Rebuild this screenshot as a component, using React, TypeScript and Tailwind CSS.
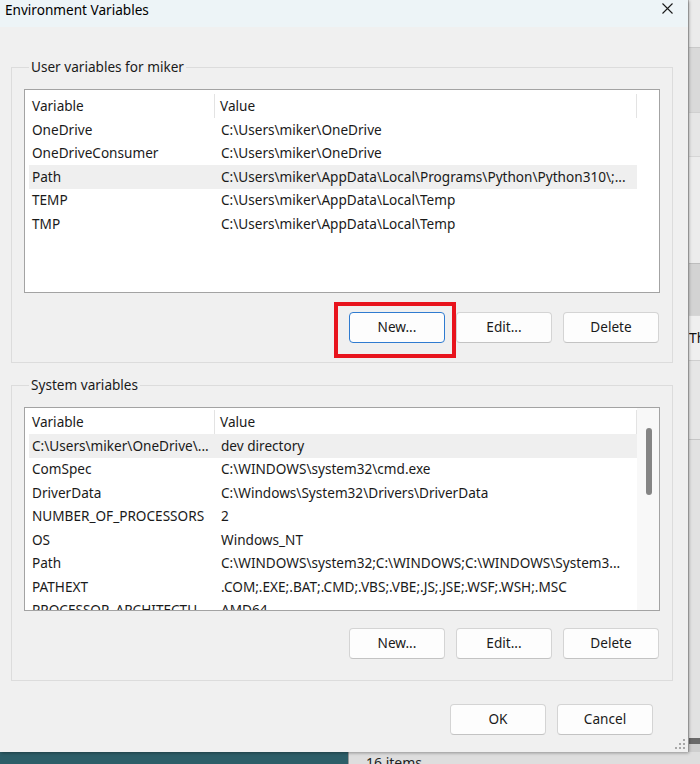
import { ReactNode } from "react";

type Row = [string, string];

const userRows: Row[] = [
  ["OneDrive", "C:\\Users\\miker\\OneDrive"],
  ["OneDriveConsumer", "C:\\Users\\miker\\OneDrive"],
  ["Path", "C:\\Users\\miker\\AppData\\Local\\Programs\\Python\\Python310\\;..."],
  ["TEMP", "C:\\Users\\miker\\AppData\\Local\\Temp"],
  ["TMP", "C:\\Users\\miker\\AppData\\Local\\Temp"],
];

const systemRows: Row[] = [
  ["C:\\Users\\miker\\OneDrive\\...", "dev directory"],
  ["ComSpec", "C:\\WINDOWS\\system32\\cmd.exe"],
  ["DriverData", "C:\\Windows\\System32\\Drivers\\DriverData"],
  ["NUMBER_OF_PROCESSORS", "2"],
  ["OS", "Windows_NT"],
  ["Path", "C:\\WINDOWS\\system32;C:\\WINDOWS;C:\\WINDOWS\\System3..."],
  ["PATHEXT", ".COM;.EXE;.BAT;.CMD;.VBS;.VBE;.JS;.JSE;.WSF;.WSH;.MSC"],
  ["PROCESSOR_ARCHITECTU...", "AMD64"],
];

interface VarListProps {
  rows: Row[];
  selected: number;
  headerClass: string;
  scrollbar?: boolean;
}

function VarList({ rows, selected, headerClass, scrollbar }: VarListProps) {
  return (
    <div className="flex h-[204px] overflow-hidden border border-[#a3a3a3] bg-white">
      <div className="flex w-[612px] flex-col pl-[4px]">
        <div className={`flex shrink-0 items-end ${headerClass}`}>
          <div className="flex h-[24px] w-[186px] items-center border-r border-[#e3e3e3] pl-[3px]">
            Variable
          </div>
          <div className="flex h-[24px] flex-1 items-center border-r border-[#e3e3e3] pl-[5px]">
            Value
          </div>
        </div>
        {rows.map(([name, value], i) => (
          <div
            key={name + i}
            className={`flex h-[23.5px] shrink-0 items-center whitespace-nowrap ${
              i === selected ? "bg-[#efefef]" : ""
            }`}
          >
            <div className="w-[186px] overflow-hidden pl-[3px]">{name}</div>
            <div className="flex-1 overflow-hidden pl-[6px]">{value}</div>
          </div>
        ))}
      </div>
      <div className={`w-[22px] pl-[9px] pt-[20px] ${scrollbar ? "bg-[#f8f8f8]" : ""}`}>
        {scrollbar && <div className="h-[67px] w-[6px] rounded-[3px] bg-[#858585]" />}
      </div>
    </div>
  );
}

function Btn({ label, focused }: { label: string; focused?: boolean }) {
  return (
    <button
      className={`flex h-[31px] w-[96px] items-center justify-center rounded-[4px] border bg-[#fdfdfd] text-[#1a1a1a] ${
        focused ? "border-[#2f7bd0]" : "border-[#d4d4d4] border-b-[#c3c3c3]"
      }`}
    >
      {label}
    </button>
  );
}

function Group({ title, children, className }: { title: string; children: ReactNode; className: string }) {
  return (
    <fieldset className={`border border-[#dcdcdc] px-[12px] ${className}`}>
      <legend className="ml-[5px] px-[2px] leading-[20px]">{title}</legend>
      {children}
    </fieldset>
  );
}

function ButtonRow({ focusNew }: { focusNew?: boolean }) {
  return (
    <div className="flex justify-end gap-[11px] pr-[1px]">
      <Btn label="New..." focused={focusNew} />
      <Btn label="Edit..." />
      <Btn label="Delete" />
    </div>
  );
}

function ResizeGrip() {
  return (
    <svg className="absolute bottom-[2px] right-[2px]" width="12" height="12" viewBox="0 0 12 12">
      <g fill="#a8a8a8">
        <rect x="9" y="1" width="2" height="2" />
        <rect x="5" y="5" width="2" height="2" />
        <rect x="9" y="5" width="2" height="2" />
        <rect x="1" y="9" width="2" height="2" />
        <rect x="5" y="9" width="2" height="2" />
        <rect x="9" y="9" width="2" height="2" />
      </g>
    </svg>
  );
}

function SideStrip() {
  return (
    <div className="flex w-[12px] flex-col border-l border-[#bcbcbc]">
      <div className="h-[47px] bg-[#ebebeb]" />
      <div className="h-[65px] border-t border-[#c9c9c9] bg-[#d9d9d9]" />
      <div className="h-[44px] border-t border-[#d0d0d0] bg-[#e6e6e6]" />
      <div className="h-[107px] border-t border-[#d6d6d6] bg-[#ececec]" />
      <div className="h-[52px] border-t border-[#bdbdbd] bg-[#d3d3d3]" />
      <div className="flex h-[45px] items-center overflow-hidden border-t border-[#d6d6d6] bg-[#efefef] text-[14px] leading-[20px] text-[#111]">
        Th
      </div>
      <div className="h-[79px] border-t border-[#cfcfcf] bg-[#e6e6e6]" />
      <div className="flex-1 border-t border-[#c6c6c6] bg-[#e2e2e2]" />
      <div className="h-[6px] bg-[#6a6a6a]" />
      <div className="h-[8px] bg-[#cfcfcf]" />
    </div>
  );
}

export default function App() {
  return (
    <div className="flex h-[764px] w-[700px] flex-col overflow-hidden bg-[#e2e2e2] font-['Segoe_UI','Noto_Sans',sans-serif] text-[13.6px] text-[#1a1a1a]">
      <div className="flex h-[752px]">
        <div className="relative flex w-[688px] flex-col bg-[#f0f0f0] shadow-[1px_1px_3px_rgba(0,0,0,0.35)]">
          <div className="flex h-[27px] shrink-0 items-start justify-between bg-[#edf4f7] pl-[5px] pr-[15px] pt-0">
            <span className="leading-[20px] text-black">Environment Variables</span>
            <svg className="mt-[3px]" width="11" height="11" viewBox="0 0 11 11">
              <path d="M0.5 0.5 L10.5 10.5 M10.5 0.5 L0.5 10.5" stroke="#1a1a1a" strokeWidth="1.1" />
            </svg>
          </div>

          <div className="flex flex-col pl-[11px] pr-[15px]">
            <Group title="User variables for miker" className="mt-[30px] pb-[19px] pt-[12px]">
              <VarList rows={userRows} selected={2} headerClass="h-[28px]" />
              <div className="mt-[19px]">
                <ButtonRow focusNew />
              </div>
            </Group>

            <Group title="System variables" className="mt-[12px] pb-[21px] pt-[12px]">
              <VarList rows={systemRows} selected={0} headerClass="h-[26px]" scrollbar />
              <div className="mt-[17px]">
                <ButtonRow />
              </div>
            </Group>

            <div className="mr-[20px] mt-[23px] flex justify-end gap-[11px]">
              <Btn label="OK" />
              <Btn label="Cancel" />
            </div>
          </div>

          <div className="pointer-events-none absolute left-[334px] top-[302px] h-[56px] w-[122px] border-[4px] border-[#e8141d]" />
          <ResizeGrip />
        </div>
        <SideStrip />
      </div>
      <div className="flex h-[12px]">
        <div className="w-[348px] bg-[#2d5e68]" />
        <div className="flex-1 overflow-hidden border-l border-[#9a9a9a] bg-[#dedede] pl-[17px] pt-[1px] text-[14px] leading-[20px] text-[#222]">
          16 items
        </div>
      </div>
    </div>
  );
}
